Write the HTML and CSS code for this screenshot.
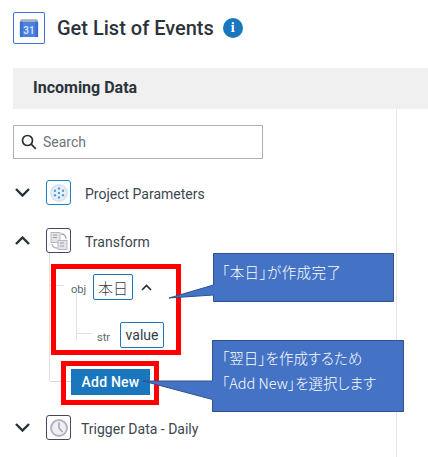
FILE: index.html
```html
<!DOCTYPE html>
<html lang="ja">
<head>
<meta charset="utf-8">
<title>Get List of Events</title>
<link rel="stylesheet" href="styles.css">
</head>
<body>
<div class="page">
  <header class="head">
    <span class="tile tile-cal">
      <svg width="20" height="20" viewBox="0 0 22 22">
        <path d="M2 1.500h18l1 2.500H1z" fill="#a4acb8"/>
        <rect x="1" y="4" width="20" height="17" rx="1" fill="#4a80e0"/>
        <rect x="1" y="4" width="3" height="17" fill="#3d70cc"/>
        <rect x="18" y="4" width="3" height="17" fill="#3d70cc"/>
        <text x="11" y="18" text-anchor="middle" class="cal-num">31</text>
      </svg>
    </span>
    <h1 class="title">Get List of Events</h1>
    <span class="info">i</span>
  </header>

  <div class="main">
    <div class="band">Incoming Data</div>
    <div class="content">
      <div class="search">
        <svg width="16" height="16" viewBox="0 0 16 16" fill="none" stroke="#263238" stroke-width="1.700">
          <circle cx="6.500" cy="6.500" r="5"/>
          <path d="M10.200 10.200l4.600 4.600"/>
        </svg>
        <span>Search</span>
      </div>

      <div class="row row-first">
        <svg class="chev" width="15" height="9" viewBox="0 0 15 9"><path d="M1 1l6.500 6.500L14 1" fill="none" stroke="#26323a" stroke-width="2.400"/></svg>
        <span class="tile tile-small tile-blue">
          <svg width="20" height="20" viewBox="0 0 20 20">
            <circle cx="10" cy="10" r="9" fill="#d6e5f5"/>
            <circle cx="10" cy="10" r="7" fill="#e9f1fa"/>
            <g fill="#5a9bd8">
              <circle cx="10" cy="5.500" r="1.200"/><circle cx="10" cy="14.500" r="1.200"/>
              <circle cx="6" cy="7.800" r="1.200"/><circle cx="14" cy="7.800" r="1.200"/>
              <circle cx="6" cy="12.200" r="1.200"/><circle cx="14" cy="12.200" r="1.200"/>
              <circle cx="10" cy="10" r="1.200"/>
            </g>
          </svg>
        </span>
        <span class="label">Project Parameters</span>
      </div>

      <div class="row row-transform">
        <svg class="chev" width="15" height="9" viewBox="0 0 15 9"><path d="M1 8l6.500-6.500L14 8" fill="none" stroke="#26323a" stroke-width="2.400"/></svg>
        <span class="tile tile-small tile-dark">
          <svg width="20" height="20" viewBox="0 0 20 20">
            <rect x="2" y="1.500" width="9" height="10" fill="#e3e3e8" stroke="#b8b8c2"/>
            <rect x="9" y="9.500" width="9" height="9" fill="#e3e3e8" stroke="#b8b8c2"/>
            <path d="M12 3c3 0 5 2 5 5M8 17c-3 0-5-2-5-4" fill="none" stroke="#a6a6b2" stroke-width="1.300"/>
            <path d="M4 4h4M4 6.500h4M11 12h4M11 15h4" stroke="#9c9ca8"/>
          </svg>
        </span>
        <span class="label">Transform</span>
      </div>

      <div class="tree">
        <div class="node-obj">
          <span class="type">obj</span>
          <span class="chip chip-jp">本日</span>
          <svg class="chev-small" width="11" height="7" viewBox="0 0 11 7"><path d="M1 6l4.500-4.500L10 6" fill="none" stroke="#26323a" stroke-width="1.700"/></svg>
        </div>
        <div class="node-str">
          <span class="type">str</span>
          <span class="chip">value</span>
        </div>
        <div class="node-add">
          <span class="add">Add New</span>
        </div>
      </div>

      <div class="row">
        <svg class="chev" width="15" height="9" viewBox="0 0 15 9"><path d="M1 1l6.500 6.500L14 1" fill="none" stroke="#26323a" stroke-width="2.400"/></svg>
        <span class="tile tile-small tile-dark">
          <svg width="20" height="20" viewBox="0 0 20 20">
            <circle cx="10" cy="10" r="8" fill="#eeeef3" stroke="#b4b4c2" stroke-width="2"/>
            <path d="M10 4.500V10l3.500 4" fill="none" stroke="#a4a4b2" stroke-width="1.500"/>
          </svg>
        </span>
        <span class="label label-trigger">Trigger Data - Daily</span>
      </div>
    </div>
  </div>

  <div class="mark mark-one"></div>
  <div class="mark mark-two"></div>

  <svg class="callout-shape" width="428" height="457" viewBox="0 0 428 457">
    <path d="M213.500 253.500h180v48h-180v-6.500L169 298l44.500-13z" fill="#4472c4" stroke="#2f528f"/>
    <path d="M212.500 340.500h191v71h-191v-12L143 381l69.500 0z" fill="#4472c4" stroke="#2f528f"/>
  </svg>
  <div class="note note-one">「本日」が作成完了</div>
  <div class="note note-two">「翌日」を作成するため<br>「Add New」を選択します</div>
</div>
</body>
</html>
```

FILE: styles.css
```css
* { box-sizing: border-box; }
html, body { margin: 0; padding: 0; background: #fff; }
body { font-family: Roboto, sans-serif; color: #2f3a44; overflow: hidden; }
.page { position: relative; width: 428px; height: 457px; overflow: hidden; }

.head { display: flex; align-items: center; height: 68px; padding: 0 0 12px 13px; }
.tile { display: flex; align-items: center; justify-content: center; background: #fff; border: 1px solid #3b6fd8; border-radius: 2px; }
.tile-cal { width: 32px; height: 32px; }
.cal-num { font: 500 11px Roboto, sans-serif; fill: #dfe9fb; }
.title { margin: 0 0 0 12px; font-size: 20px; font-weight: 500; color: #2b333b; line-height: 32px; }
.info { width: 20px; height: 20px; margin-left: 9px; border-radius: 50%; background: #1a76bd; color: #fff; font: 700 14px/20px "Liberation Serif", serif; text-align: center; }

.main { height: 389px; }
.band { height: 41px; margin-left: 13px; padding-left: 20px; background: #f0f0f0; font-size: 16px; font-weight: 700; line-height: 40px; color: #2b333b; }
.content { position: relative; height: 348px; margin-right: 31px; padding: 16px 0 0 13px; border-right: 1px solid #e1e7ea; }

.search { display: flex; align-items: center; gap: 6px; width: 250px; height: 34px; padding-left: 7px; border: 1px solid #b0b0b0; font-size: 14px; color: #6b747c; }

.row { display: flex; align-items: center; height: 25px; }
.row-first { margin-top: 21px; }
.row-transform { margin-top: 23px; }
.chev { margin: 0 16px 0 2px; flex: none; }
.tile-small { width: 25px; height: 25px; border-radius: 3px; }
.tile-blue { border-color: #1a82c4; }
.tile-dark { border-color: #4a4468; }
.label { position: relative; top: 1px; margin-left: 14px; font-size: 14px; color: #3c4650; }
.label-trigger { margin-left: 10px; }

.tree { position: relative; height: 162px; margin-left: 23px; padding-top: 21px; }
.tree::before { content: ""; position: absolute; left: 13px; top: 0; width: 1px; height: 128px; background: #e2e2e2; }
.node-obj { position: relative; display: flex; align-items: center; height: 26px; padding-left: 35px; }
.node-obj::before { content: ""; position: absolute; left: 14px; top: 11px; width: 14px; height: 1px; background: #e2e2e2; }
.node-obj::after { content: ""; position: absolute; left: 40px; top: 19px; width: 1px; height: 48px; background: #e2e2e2; }
.type { font-size: 11px; color: #5a6670; position: relative; top: 2px; }
.chip { display: inline-flex; align-items: center; justify-content: center; height: 26px; border: 1px solid #1a76bd; border-radius: 2px; font-size: 14px; color: #333c45; background: #fff; }
.chip-jp { width: 40px; margin-left: 7px; font-family: "Noto Sans CJK JP", sans-serif; font-size: 15px; font-weight: 300; }
.chev-small { margin-left: 8px; }
.node-str { position: relative; display: flex; align-items: center; height: 26px; margin-top: 22px; padding-left: 61px; }
.node-str::before { content: ""; position: absolute; left: 40px; top: 11px; width: 16px; height: 1px; background: #e2e2e2; }
.node-str .chip { width: 44px; margin-left: 10px; }
.node-add { position: relative; height: 26px; margin-top: 21px; padding-left: 35px; }
.node-add::before { content: ""; position: absolute; left: 14px; top: 12px; width: 123px; height: 1px; background: #d8d8d8; }
.add { position: relative; display: block; width: 79px; height: 26px; background: #1a76bd; color: #fff; font-size: 14px; font-weight: 500; line-height: 26px; text-align: center; letter-spacing: .2px; }

.mark { position: absolute; border: 5px solid #f00; }
.mark-one { left: 51px; top: 264px; width: 130px; height: 91px; }
.mark-two { left: 61px; top: 361px; width: 98px; height: 44px; }

.callout-shape { position: absolute; left: 0; top: 0; }
.note { position: absolute; color: #fff; font-family: "Noto Sans CJK JP", sans-serif; font-size: 14.500px; font-weight: 300; font-feature-settings: "palt"; line-height: 25px; white-space: nowrap; }
.note-one { left: 222px; top: 259px; letter-spacing: .4px; }
.note-two { left: 222px; top: 345px; }
```
